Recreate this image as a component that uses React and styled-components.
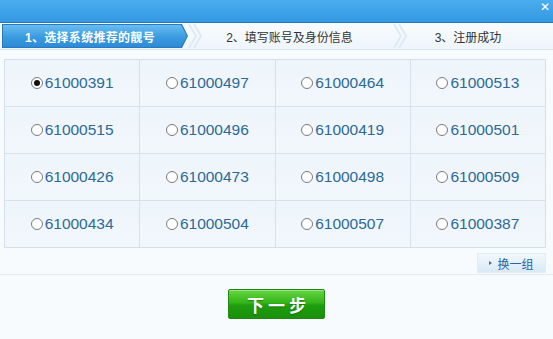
import React, { useState } from 'react';
import styled, { createGlobalStyle } from 'styled-components';

const GlobalStyle = createGlobalStyle`
  html, body {
    margin: 0;
    padding: 0;
    background: #f7fafd;
    font-family: "Liberation Sans", "Noto Sans CJK SC", sans-serif;
  }
`

const Window = styled.div`
  width: 553px;
  height: 339px;
  background: #f8fbfd;
  overflow: hidden;
`

const TitleBar = styled.div`
  height: 22px;
  background: linear-gradient(#4badee, #3399e2);
  border-bottom: 1px solid #1f7ac4;
  display: flex;
  justify-content: flex-end;
  align-items: flex-start;
`

const Close = styled.span`
  color: #ffffff;
  font-size: 12px;
  font-weight: bold;
  line-height: 12px;
  padding: 1px 3px 0 0;
  font-family: "DejaVu Sans", sans-serif;
`

const TabStrip = styled.div`
  height: 25px;
  padding: 1px 0 0 2px;
  background: linear-gradient(#f9fcfe, #eef5fb);
  border-bottom: 1px solid #d6e4f0;
  display: flex;
  align-items: stretch;
`

const ActiveTab = styled.div`
  width: 186px;
  height: 24px;
  background: #2a78bd;
  clip-path: polygon(0 0, 180px 0, 186px 50%, 180px 100%, 0 100%);
  padding: 1px;
  box-sizing: border-box;
`

const ActiveFill = styled.div`
  height: 100%;
  background: linear-gradient(#68bdf0, #3a9be0 55%, #2d8bd6);
  clip-path: polygon(0 0, 178px 0, 184px 50%, 178px 100%, 0 100%);
  color: #ffffff;
  font-size: 12px;
  font-weight: bold;
  display: flex;
  align-items: center;
  padding-left: 22px;
  letter-spacing: 0.3px;
`

const Tab = styled.div`
  width: ${({ $w }) => $w}px;
  display: flex;
  align-items: center;
  justify-content: center;
  font-size: 12px;
  color: #333333;
  padding-right: ${({ $pr }) => $pr || 0}px;
  box-sizing: border-box;
  height: 24px;
`

const Chevron = styled.svg`
  flex: none;
  display: block;
`

const Content = styled.div`
  padding: 9px 7px 0 4px;
`

const Grid = styled.div`
  display: grid;
  grid-template-columns: repeat(4, 1fr);
  grid-auto-rows: 46px;
  border: 1px solid #d4dfe9;
  gap: 1px;
  background-color: #d6e1ea;
`

const Cell = styled.label`
  background: linear-gradient(#eef5fb, #f2f7fc);
  display: flex;
  align-items: center;
  justify-content: center;
  cursor: pointer;
  color: #2c6a97;
  font-size: 15.5px;
  padding-bottom: 1px;
`

const Radio = styled.span`
  width: 10px;
  height: 10px;
  border: 1px solid #7a7a7a;
  border-radius: 50%;
  background: #ffffff;
  margin-right: 2px;
  display: flex;
  align-items: center;
  justify-content: center;
  &::after {
    content: '';
    width: 6px;
    height: 6px;
    border-radius: 50%;
    background: ${({ $on }) => ($on ? '#111111' : 'transparent')};
  }
`

const Toolbar = styled.div`
  display: flex;
  justify-content: flex-end;
  padding: 5px 7px 1px 0;
  border-bottom: 1px solid #e3ebf2;
  margin: 0 -7px 0 -4px;
`

const SwapButton = styled.button`
  width: 69px;
  height: 20px;
  border: 1px solid #e2ecf4;
  background: linear-gradient(#f2f8fd, #d9e9f6);
  color: #2367a3;
  font-size: 12px;
  font-family: inherit;
  display: flex;
  align-items: center;
  justify-content: center;
  gap: 5px;
  padding: 0;
  &::before {
    content: '';
    border-left: 3px solid #4b6a85;
    border-top: 2.5px solid transparent;
    border-bottom: 2.5px solid transparent;
  }
`

const Footer = styled.div`
  display: flex;
  justify-content: center;
  padding-top: 14px;
`

const NextButton = styled.button`
  width: 97px;
  height: 30px;
  border: 1px solid #1e8a12;
  border-radius: 2px;
  background: linear-gradient(#66d640, #34b41a 45%, #1f9d0e 55%, #19900a);
  color: #ffffff;
  font-size: 17px;
  font-weight: bold;
  letter-spacing: 4px;
  padding: 0 0 0 4px;
  font-family: inherit;
  text-shadow: 0 1px 1px rgba(0, 80, 0, 0.5);
  box-shadow: inset 0 1px 0 rgba(255, 255, 255, 0.35);
`

const numbers = [
  '61000391', '61000497', '61000464', '61000513',
  '61000515', '61000496', '61000419', '61000501',
  '61000426', '61000473', '61000498', '61000509',
  '61000434', '61000504', '61000507', '61000387',
]

const Sep = () => (
  <Chevron width="14" height="24" viewBox="0 0 14 24">
    <path d="M1 0 L8 12 L1 24 M6 0 L13 12 L6 24" fill="none" stroke="#e0eaf3" strokeWidth="2" />
  </Chevron>
)

export default function App() {
  const [picked, setPicked] = useState(0)
  return (
    <Window>
      <GlobalStyle />
      <TitleBar>
        <Close>✕</Close>
      </TitleBar>
      <TabStrip>
        <ActiveTab>
          <ActiveFill>1、选择系统推荐的靓号</ActiveFill>
        </ActiveTab>
        <Sep />
        <Tab $w={191} $pr={16}>2、填写账号及身份信息</Tab>
        <Sep />
        <Tab $w={146} $pr={24}>3、注册成功</Tab>
      </TabStrip>
      <Content>
        <Grid>
          {numbers.map((n, i) => (
            <Cell key={n} onClick={() => setPicked(i)}>
              <Radio $on={picked === i} />
              {n}
            </Cell>
          ))}
        </Grid>
        <Toolbar>
          <SwapButton>换一组</SwapButton>
        </Toolbar>
      </Content>
      <Footer>
        <NextButton>下一步</NextButton>
      </Footer>
    </Window>
  )
}
